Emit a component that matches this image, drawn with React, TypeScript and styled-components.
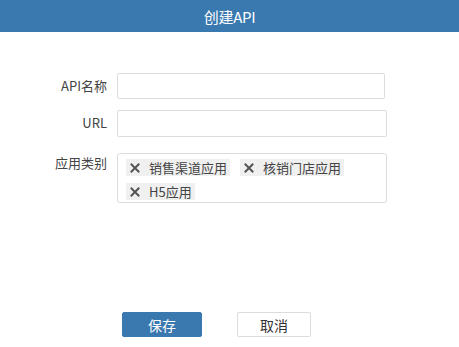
import React from 'react'
import styled, { createGlobalStyle } from 'styled-components'

const GlobalStyle = createGlobalStyle`
  html, body {
    margin: 0;
    padding: 0;
    background: #fff;
    font-family: 'Noto Sans CJK SC', 'Noto Sans', sans-serif;
    color: #333;
  }
`

const Header = styled.header`
  height: 32px;
  background: #3a78b0;
  color: #fff;
  font-size: 15px;
  display: flex;
  align-items: center;
  justify-content: center;
  letter-spacing: -0.3px;
`

const Form = styled.form`
  display: flex;
  flex-direction: column;
  padding-top: 41px;
`

const Row = styled.div<{ $gap: number }>`
  display: flex;
  align-items: flex-start;
  margin-bottom: ${(p) => p.$gap}px;
`

const Label = styled.label<{ $top?: boolean }>`
  width: 107px;
  flex: none;
  text-align: right;
  font-size: 13px;
  color: #444;
  line-height: 18px;
  padding-top: ${(p) => (p.$top ? 1 : 4)}px;
  margin-right: 10px;
`

const Input = styled.input<{ $width: number; $height: number }>`
  box-sizing: border-box;
  width: ${(p) => p.$width}px;
  height: ${(p) => p.$height}px;
  border: 1px solid #dcdcdc;
  border-radius: 2px;
  outline: none;
  padding: 0 6px;
  font: inherit;
`

const TagBox = styled.div`
  box-sizing: border-box;
  width: 270px;
  height: 50px;
  border: 1px solid #dcdcdc;
  border-radius: 3px;
  padding: 5px 0 0 8px;
  display: flex;
  flex-wrap: wrap;
  align-content: flex-start;
  gap: 7px 10px;
`

const Tag = styled.span`
  display: inline-flex;
  align-items: center;
  height: 17px;
  background: #f0f0f0;
  padding: 0 3px 0 4px;
  font-size: 13px;
  color: #444;
  line-height: 17px;
`

const Close = styled.span`
  width: 10px;
  height: 10px;
  margin-right: 9px;
  display: inline-flex;
`

const Actions = styled.div`
  display: flex;
  gap: 35px;
  padding-left: 122px;
  margin-top: 109px;
`

const Button = styled.button<{ $primary?: boolean; $width: number }>`
  box-sizing: border-box;
  width: ${(p) => p.$width}px;
  height: 25px;
  border-radius: 2px;
  font: inherit;
  font-size: 14px;
  line-height: 1;
  padding: 0;
  border: 1px solid ${(p) => (p.$primary ? '#3a78b0' : '#dcdcdc')};
  background: ${(p) => (p.$primary ? '#3a78b0' : '#fff')};
  color: ${(p) => (p.$primary ? '#fff' : '#333')};
`

const XIcon = () => (
  <svg width="10" height="10" viewBox="0 0 10 10">
    <path d="M1.5 1.5 L8.5 8.5 M8.5 1.5 L1.5 8.5" stroke="#555" strokeWidth="2" strokeLinecap="square" />
  </svg>
)

const tags = ['销售渠道应用', '核销门店应用', 'H5应用']

export default function App() {
  return (
    <>
      <GlobalStyle />
      <Header>创建API</Header>
      <Form>
        <Row $gap={11}>
          <Label>API名称</Label>
          <Input $width={268} $height={26} />
        </Row>
        <Row $gap={16}>
          <Label>URL</Label>
          <Input $width={270} $height={27} />
        </Row>
        <Row $gap={0}>
          <Label $top>应用类别</Label>
          <TagBox>
            {tags.map((t) => (
              <Tag key={t}>
                <Close>
                  <XIcon />
                </Close>
                {t}
              </Tag>
            ))}
          </TagBox>
        </Row>
      </Form>
      <Actions>
        <Button type="button" $primary $width={80}>
          保存
        </Button>
        <Button type="button" $width={74}>
          取消
        </Button>
      </Actions>
    </>
  )
}
